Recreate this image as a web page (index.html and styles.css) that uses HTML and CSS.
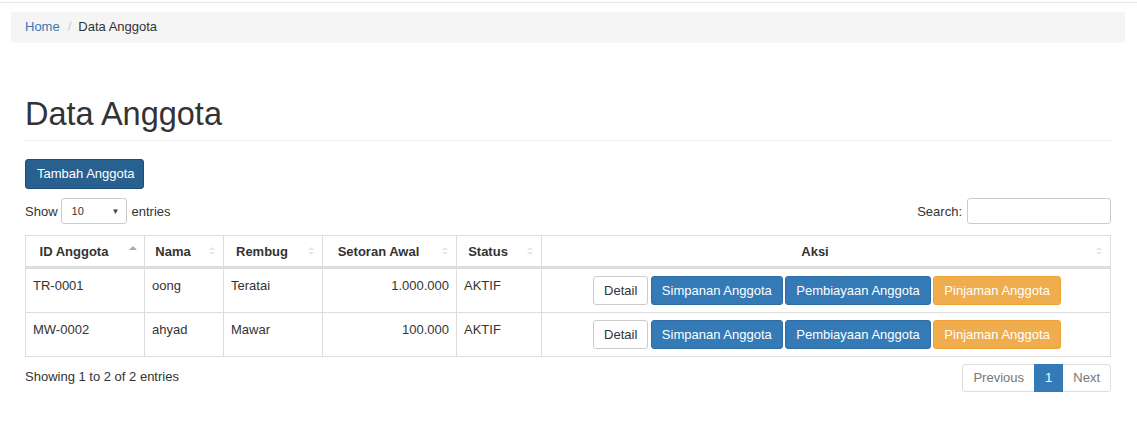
FILE: index.html
```html
<!DOCTYPE html>
<html lang="id">
<head>
<meta charset="utf-8">
<title>Data Anggota</title>
<link rel="stylesheet" href="styles.css">
</head>
<body>
<div class="topbar"></div>
<div class="wrapper">
  <ol class="breadcrumb">
    <li><a href="#">Home</a></li>
    <li class="sep">/</li>
    <li class="active">Data Anggota</li>
  </ol>
  <div class="content">
    <h1 class="page-header">Data Anggota</h1>
    <button class="btn btn-primary-dark">Tambah Anggota</button>
    <div class="dt-top">
      <label class="dt-length">Show
        <span class="select"><span>10</span><span class="caret">&#9660;</span></span>
        entries</label>
      <label class="dt-search">Search: <span class="input"></span></label>
    </div>
    <table class="table">
      <thead>
        <tr>
          <th class="c-id sort-asc">ID Anggota<span class="sort"><i class="up"></i><i class="down"></i></span></th>
          <th class="c-nama">Nama<span class="sort"><i class="up"></i><i class="down"></i></span></th>
          <th class="c-rembug">Rembug<span class="sort"><i class="up"></i><i class="down"></i></span></th>
          <th class="c-setoran">Setoran Awal<span class="sort"><i class="up"></i><i class="down"></i></span></th>
          <th class="c-status">Status<span class="sort"><i class="up"></i><i class="down"></i></span></th>
          <th class="c-aksi">Aksi<span class="sort"><i class="up"></i><i class="down"></i></span></th>
        </tr>
      </thead>
      <tbody>
        <tr>
          <td>TR-0001</td>
          <td>oong</td>
          <td>Teratai</td>
          <td class="num">1.000.000</td>
          <td>AKTIF</td>
          <td class="aksi">
            <div class="btn-row">
              <button class="btn btn-default">Detail</button>
              <button class="btn btn-primary">Simpanan Anggota</button>
              <button class="btn btn-primary">Pembiayaan Anggota</button>
              <button class="btn btn-warning">Pinjaman Anggota</button>
            </div>
          </td>
        </tr>
        <tr>
          <td>MW-0002</td>
          <td>ahyad</td>
          <td>Mawar</td>
          <td class="num">100.000</td>
          <td>AKTIF</td>
          <td class="aksi">
            <div class="btn-row">
              <button class="btn btn-default">Detail</button>
              <button class="btn btn-primary">Simpanan Anggota</button>
              <button class="btn btn-primary">Pembiayaan Anggota</button>
              <button class="btn btn-warning">Pinjaman Anggota</button>
            </div>
          </td>
        </tr>
      </tbody>
    </table>
    <div class="dt-bottom">
      <div class="dt-info">Showing 1 to 2 of 2 entries</div>
      <ul class="pagination">
        <li class="disabled"><a href="#">Previous</a></li>
        <li class="active"><a href="#">1</a></li>
        <li class="disabled"><a href="#">Next</a></li>
      </ul>
    </div>
  </div>
</div>
</body>
</html>
```

FILE: styles.css
```css
* { box-sizing: border-box; }
html, body { margin: 0; padding: 0; }
body {
  font-family: "Liberation Sans", Arial, Helvetica, sans-serif;
  font-size: 13px;
  line-height: 19px;
  color: #333;
  background: #fff;
}
a { color: #337ab7; text-decoration: none; }

.topbar { height: 3px; border-bottom: 1px solid #e7e7e7; }

.wrapper { padding: 0 12px 0 11px; }

.breadcrumb {
  list-style: none;
  margin: 9px 0 0;
  padding: 5px 14px 7px;
  background: #f5f5f5;
  border-radius: 3px;
  display: flex;
}
.breadcrumb li { display: block; }
.breadcrumb .sep { color: #ccc; padding: 0 7px 0 8px; }
.breadcrumb .active { color: #333; }

.content { padding: 0 14px; }

.page-header {
  margin: 51px 0 18px;
  padding-bottom: 6px;
  border-bottom: 1px solid #eee;
  font-size: 32.5px;
  font-weight: 500;
  line-height: 40px;
}

.btn {
  display: inline-block;
  font-family: inherit;
  font-size: 13px;
  line-height: 17px;
  padding: 5px 10px;
  border: 1px solid transparent;
  border-radius: 3px;
  cursor: pointer;
  white-space: nowrap;
}
.btn-primary-dark {
  background: #286090;
  border-color: #204d74;
  color: #fff;
  padding: 5px 11px 6px;
  line-height: 17px;
  width: 119px;
}
.btn-primary { background: #337ab7; border-color: #2e6da4; color: #fff; }
.btn-warning { background: #f0ad4e; border-color: #eea236; color: #fff; }
.btn-default { background: #fff; border-color: #ccc; color: #333; }

.dt-top {
  display: flex;
  justify-content: space-between;
  align-items: center;
  margin-top: 9px;
}
.dt-length, .dt-search { display: flex; align-items: center; }
.select {
  display: inline-flex;
  align-items: center;
  justify-content: space-between;
  width: 66px;
  height: 26px;
  margin: 0 5px 0 3px;
  padding: 0 6px 0 10px;
  border: 1px solid #ccc;
  border-radius: 3px;
  font-size: 11px;
}
.select .caret { font-size: 8px; color: #444; }
.input {
  display: inline-block;
  width: 144px;
  height: 26px;
  margin-left: 5px;
  border: 1px solid #ccc;
  border-radius: 3px;
}

.table {
  width: 100%;
  margin-top: 11px;
  border-collapse: collapse;
  border: 1px solid #ddd;
}
.table th, .table td { border: 1px solid #ddd; }
.table th {
  position: relative;
  font-weight: bold;
  text-align: center;
  padding: 6px 30px 5px 8px;
  border-bottom: 3px solid #ddd;
  white-space: nowrap;
}
.table th.c-id { width: 119px; }
.table th.c-nama { width: 79px; }
.table th.c-rembug { width: 99px; }
.table th.c-setoran { width: 134px; }
.table th.c-status { width: 85px; }
.table td {
  vertical-align: top;
  padding: 7px;
}
.table td.num { text-align: right; }
.table td.aksi { padding: 7px 8px; }
.btn-row { display: flex; justify-content: center; gap: 2.5px; padding-left: 2px; }

.sort {
  position: absolute;
  right: 8px;
  top: 11px;
  display: flex;
  flex-direction: column;
  gap: 2px;
}
.sort i {
  display: block;
  width: 0; height: 0;
  border-left: 3px solid transparent;
  border-right: 3px solid transparent;
}
.sort .up { border-bottom: 3px solid #e6e6e6; }
.sort .down { border-top: 3px solid #e6e6e6; }
.sort-asc .sort .up { border-bottom-color: #aaa; border-left-width: 4px; border-right-width: 4px; border-bottom-width: 4px; }
.sort-asc .sort .down { border-top-color: transparent; }
.sort-asc .sort { right: 7px; top: 10px; }

.dt-bottom {
  display: flex;
  justify-content: space-between;
  align-items: flex-start;
  margin-top: 7px;
}
.dt-info { padding-top: 3px; }
.pagination {
  list-style: none;
  margin: 0;
  padding: 0;
  display: flex;
}
.pagination li a {
  display: block;
  padding: 4px 10px;
  line-height: 18px;
  border: 1px solid #ddd;
  margin-left: -1px;
  background: #fff;
}
.pagination li:first-child a { border-radius: 3px 0 0 3px; margin-left: 0; }
.pagination li:last-child a { border-radius: 0 3px 3px 0; }
.pagination li.disabled a { color: #777; }
.pagination li.active a { background: #337ab7; border-color: #337ab7; color: #fff; position: relative; }
```
